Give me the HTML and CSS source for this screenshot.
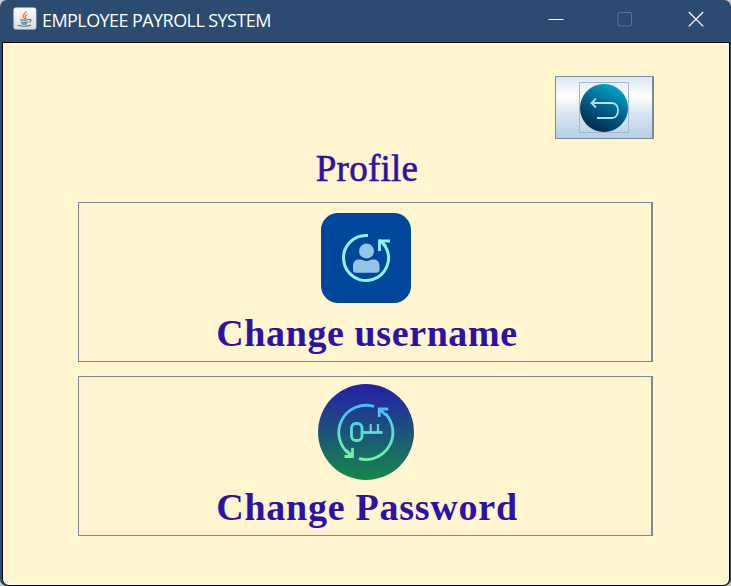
FILE: index.html
```html
<!DOCTYPE html>
<html lang="en">
<head>
<meta charset="utf-8">
<title>EMPLOYEE PAYROLL SYSTEM</title>
<link rel="stylesheet" href="styles.css">
</head>
<body>
<div class="window">
  <header class="titlebar">
    <svg class="app-icon" viewBox="0 0 24 24" width="24" height="24">
      <defs><linearGradient id="tile" x1="0" y1="0" x2="0" y2="1"><stop offset="0" stop-color="#fff"/><stop offset="1" stop-color="#d9dbde"/></linearGradient></defs>
      <rect x=".7" y=".7" width="22.4" height="21.6" rx="2" fill="url(#tile)" stroke="#c3cad3" stroke-width=".6"/>
      <path d="M13 4c1 2-4 3.500-3 5.500.300.900 1.500 1.500 1.500 2.500M14.500 7.500c-2.500 1-3 2-1.800 3.200.6.600 0 1.300-.7 1.800" fill="none" stroke="#e8862e" stroke-width="1.300"/>
      <path d="M7 12.500c2 .900 7 .900 9 0M7.800 14.700c2 .700 5.200.7 7 0M8.500 16.600c1.800.6 4 .600 5.500 0M16 12.300c3-.3 2.500 2.500-.5 3.200M5 18.200c3 1.400 10 1.400 13-.2" fill="none" stroke="#58798f" stroke-width="1.200"/>
    </svg>
    <span class="caption">EMPLOYEE PAYROLL SYSTEM</span>
    <div class="controls">
      <svg viewBox="0 0 16 16" width="16" height="16"><path d="M.5 8.500h15" stroke="#fff"/></svg>
      <svg viewBox="0 0 16 16" width="16" height="16"><rect x="1" y="1.500" width="13.500" height="13.500" rx="1" fill="none" stroke="#587394"/></svg>
      <svg viewBox="0 0 16 16" width="16" height="16"><path d="M.8 1l14.400 14.400M15.200 1L.8 15.400" stroke="#fff" stroke-width="1.300"/></svg>
    </div>
  </header>
  <main class="content">
    <button class="back" aria-label="Back">
      <svg viewBox="0 0 50 51" width="50" height="51">
        <defs><linearGradient id="teal" x1=".75" y1="0" x2=".25" y2="1"><stop offset="0" stop-color="#00abd0"/><stop offset=".5" stop-color="#045f85"/><stop offset="1" stop-color="#002448"/></linearGradient></defs>
        <rect x=".5" y=".5" width="49" height="50" fill="none" stroke="#a3b8cc"/>
        <circle cx="25" cy="26" r="24" fill="url(#teal)"/>
        <g fill="none" stroke="#b5dfe9" stroke-width="1.800"><path d="M12.500 21H33c8 0 8 15 0 15H18"/><path d="M17 16.500L12.500 21l4.500 4.500"/></g>
      </svg>
    </button>
    <h1 class="heading">Profile</h1>
    <button class="card">
      <svg viewBox="0 0 90 90" width="90" height="90">
        <rect width="90" height="90" rx="17" fill="#00469b"/>
        <path d="M47 22.500A22.500 22.500 0 1 0 65 34.500L61 29" fill="none" stroke="#91f2f2" stroke-width="3"/>
        <path d="M69 28H58.500V38" fill="none" stroke="#91f2f2" stroke-width="2.800"/>
        <path d="M58 27l7 6" fill="none" stroke="#91f2f2" stroke-width="2.500"/>
        <circle cx="45.500" cy="38" r="7.500" fill="#94c5e6"/>
        <path d="M32 57v-4c0-4 2-6.500 6-6.500 5 0 4 1.500 7.500 1.500s2.500-1.500 7-1.500c4 0 6 2.500 6 6.500v4q0 2.800-3 2.800H35q-3 0-3-2.800Z" fill="#94c5e6"/>
      </svg>
      <span class="label username">Change username</span>
    </button>
    <button class="card second">
      <svg viewBox="0 0 96 96" width="96" height="96">
        <defs>
          <linearGradient id="disc" x1="0" y1="0" x2="0" y2="1"><stop offset="0" stop-color="#241ea8"/><stop offset="1" stop-color="#16874c"/></linearGradient>
          <linearGradient id="glow" gradientUnits="userSpaceOnUse" x1="0" y1="20" x2="0" y2="77"><stop offset="0" stop-color="#42bef7"/><stop offset=".5" stop-color="#5cdfd4"/><stop offset="1" stop-color="#74f794"/></linearGradient>
        </defs>
        <circle cx="48" cy="48" r="48" fill="url(#disc)"/>
        <g fill="none" stroke="url(#glow)" stroke-width="2.800">
          <path d="M56 22.500A27.200 27.200 0 0 0 32 70.500M67.500 29.700A27.200 27.200 0 0 1 41 74.700"/>
          <path d="M61.200 33V25h9M62 26l6 5M34.500 64v8.500H26.500M34 72l-6-6"/>
          <rect x="33.500" y="39.500" width="10.500" height="17" rx="4.500"/>
          <path d="M44 48.500h20.500"/><path d="M52.700 48V40M60 48V40" stroke-width="2.200"/>
        </g>
      </svg>
      <span class="label password">Change Password</span>
    </button>
  </main>
</div>
</body>
</html>
```

FILE: styles.css
```css
* { box-sizing: border-box; }
body { margin: 0; background: #c9cbd0; }
.window {
  width: 731px;
  height: 586px;
  display: flex;
  flex-direction: column;
  padding: 0 1px 0 2px;
  background: #2b4b71;
  border-radius: 7px;
  overflow: hidden;
}
.titlebar {
  flex: none;
  height: 42px;
  display: flex;
  align-items: center;
  padding: 0 26px 4px 11px;
  color: #fff;
}
.app-icon { margin-right: 5px; }
.caption {
  font: 18px/24px "Open Sans", "Noto Sans", sans-serif;
  letter-spacing: -0.57px;
  white-space: nowrap;
  padding-top: 1px;
}
.controls { display: flex; gap: 54px; margin-left: auto; }
.controls svg:nth-child(2) { margin: 0 1px 0 -1px; }
.content {
  flex: 1;
  display: flex;
  flex-direction: column;
  padding: 33px 75px 0;
  background: #fff6cf;
  border: 1px solid #000;
  border-radius: 0 0 7px 7px;
}
button {
  margin: 0;
  padding: 0;
  border: 1px solid #7a8a99;
  border-right-width: 2px;
  border-radius: 0;
}
.back {
  align-self: flex-end;
  flex: none;
  width: 99px;
  height: 63px;
  display: flex;
  align-items: center;
  justify-content: center;
  background: linear-gradient(#dce7f2 0, #fff 32%, #dce6f1 58%, #b8cfe5 100%);
}
.heading {
  height: 63px;
  margin: 0;
  padding: 10px 0 0 2px;
  text-align: center;
  color: #2d12a5;
  font: 400 37px/40px "Liberation Serif", serif;
  letter-spacing: .25px;
  -webkit-text-stroke: .6px #2d12a5;
}
.card {
  flex: none;
  width: 575px;
  height: 160px;
  display: flex;
  flex-direction: column;
  align-items: center;
  padding: 10px 0 0 1px;
  background: transparent;
}
.card.second { margin-top: 14px; padding-top: 7px; }
.label {
  margin-top: 10px;
  padding-left: 3px;
  color: #2d12a5;
  font: 700 38px/40px "Liberation Serif", serif;
}
.second .label { margin-top: 7px; }
.username { letter-spacing: .6px; }
.password { letter-spacing: .75px; }
```
